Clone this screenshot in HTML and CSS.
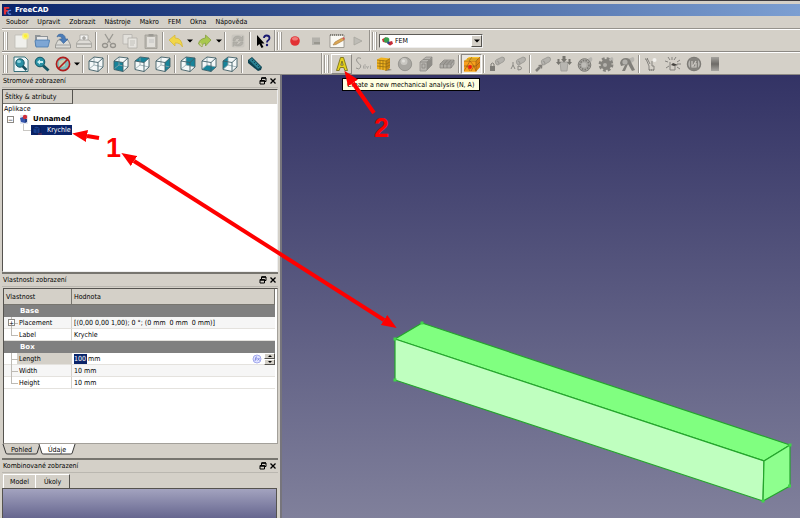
FILE: index.html
```html
<!DOCTYPE html>
<html lang="cs">
<head>
<meta charset="utf-8">
<title>FreeCAD</title>
<link rel="stylesheet" href="styles.css">
</head>
<body>
<svg class="defs" aria-hidden="true">
  <symbol id="wire" viewBox="0 0 16 16">
    <path d="M6 1V9L1 13M6 9L15 11" fill="none" stroke="#8fa3a8" stroke-width=".8"/>
    <path d="M1 5L10 6.500V15.500L1 13.500ZM1 5L6 1L15 2L10 6.500M15 2V11L10 15.500" fill="none" stroke="#3f5e66" stroke-width=".9" stroke-linejoin="round"/>
  </symbol>
  <symbol id="shell" viewBox="0 0 16 16"><path d="M1 5L6 1L15 2V11L10 15.500L1 13.500Z" fill="#f4f8f8"/></symbol>
  <symbol id="float" viewBox="0 0 8 8"><path d="M2.500 3V1H7V4.500H5.500" fill="none" stroke="#000"/><path d="M2.500 1H7" stroke="#000" stroke-width="1.500"/><path d="M1 3.500H5.500V7H1Z" fill="none" stroke="#000"/><path d="M1 4H5.500" stroke="#000" stroke-width="1.500"/></symbol>
  <symbol id="close" viewBox="0 0 8 8"><path d="M1.500 1.500L6.500 6.500M6.500 1.500L1.500 6.500" stroke="#000" stroke-width="1.300"/></symbol>
  <symbol id="tube" viewBox="0 0 16 16"><path d="M7 8Q5 4 9 3L13 1Q16 1 15.500 4Q15 6 12 7L9 9Q8 9 7 8Z" fill="#b4b2ad" stroke="#96948f" stroke-width=".8"/><path d="M8 5Q10 5 10 8" fill="none" stroke="#8f8d88" stroke-width=".8"/></symbol>
  <marker id="head" markerUnits="userSpaceOnUse" markerWidth="15" markerHeight="12" refX="0" refY="6" orient="auto-start-reverse"><path d="M0 0L15 6L0 12Z" fill="#fe0000"/></marker>
</svg>

<header class="titlebar">
  <svg class="app-icon" viewBox="0 0 10 10"><path d="M1 1H7V3H3.500V4.500H6V6.500H3.500V9.500H1Z" fill="#e03038"/><path d="M9 5Q5.500 4.500 5.500 7Q5.500 9.500 9 9" fill="none" stroke="#5a7fd8" stroke-width="1.400"/></svg>
  <span>FreeCAD</span>
</header>
<nav class="menubar">
  <a href="#">Soubor</a><a href="#">Upravit</a><a href="#">Zobrazit</a><a href="#">Nástroje</a><a href="#">Makro</a><a href="#">FEM</a><a href="#">Okna</a><a href="#">Nápověda</a>
</nav>

<div class="toolbar">
  <div class="group">
    <i class="grip"></i>
    <button aria-label="Nový"><svg viewBox="0 0 16 16"><path d="M2 2H14V15H2Z" fill="#f0f0ec" stroke="#bebcb5" stroke-width=".8"/><circle cx="12.500" cy="3" r="3.500" fill="#fff46a" opacity=".75"/><circle cx="12.500" cy="3" r="1.800" fill="#fdf12e"/></svg></button>
    <button aria-label="Otevřít"><svg viewBox="0 0 16 16"><path d="M1 2H6L7 3H14V13H1Z" fill="#8e9397"/><path d="M3 4H13V8H3Z" fill="#e8e8e8"/><path d="M2 14L1 8Q1 7 2 7H15Q16 7 15.500 8L14 14Z" fill="#7ea6d4" stroke="#4878ad" stroke-width=".8"/></svg></button>
    <button aria-label="Uložit"><svg viewBox="0 0 16 16"><path d="M3 7H13L15.500 12V15H.5V12Z" fill="#dcdcd8" stroke="#8b8b88" stroke-width=".8"/><path d="M1 12H15" stroke="#a2a2a0"/><path d="M2 4Q3 0 8 1.500Q10.500 3 10.500 6H13L8.500 10.500L4.500 6H7Q7 4 5 3.500Q3 3 2 4Z" fill="#4b7cb8" stroke="#356297" stroke-width=".6"/></svg></button>
    <button aria-label="Tisk"><svg viewBox="0 0 16 16"><path d="M4 2H12V8H4Z" fill="#f2f2f0" stroke="#aaa8a2" stroke-width=".8"/><path d="M3 7H13L15.500 10V14.500H.5V10Z" fill="#dedcd7" stroke="#a19f99" stroke-width=".8"/><path d="M1 11H15M6 5H10M8 3V7" stroke="#93918c"/></svg></button>
    <i class="sep"></i>
    <button aria-label="Vyjmout"><svg viewBox="0 0 16 16"><path d="M4 1L9.500 10M12 1L6.500 10" stroke="#9a9892" stroke-width="1.300"/><g fill="none" stroke="#95938d" stroke-width="1.300"><ellipse cx="4" cy="12.500" rx="2.500" ry="2"/><ellipse cx="12" cy="12.500" rx="2.500" ry="2"/></g></svg></button>
    <button aria-label="Kopírovat"><svg viewBox="0 0 16 16"><path d="M1 1.500H10V11H1Z" fill="#e2e0db" stroke="#b5b3ad" stroke-width=".8"/><path d="M6 5H15V15H6Z" fill="#e6e4df" stroke="#aeaca6" stroke-width=".8"/><path d="M8 8H13M8 10H13M8 12H12" stroke="#b9b7b1" stroke-width=".8"/></svg></button>
    <button aria-label="Vložit"><svg viewBox="0 0 16 16"><path d="M2 2H14V15.500H2Z" fill="#bab7b0" stroke="#9f9d96" stroke-width=".8"/><path d="M4 4H12V14H4Z" fill="#e2e0db"/><path d="M5.500 1H10.500V3.500H5.500Z" fill="#9c9a94"/><path d="M6 7H11M6 9H11" stroke="#bbb" stroke-width=".8"/></svg></button>
    <i class="sep"></i>
    <button aria-label="Zpět"><svg viewBox="0 0 16 16"><path d="M1 7L7 2V5Q14 5 14.500 14Q12 9.500 7 10V13Z" fill="#f1d648" stroke="#d2b434" stroke-width=".7"/></svg></button>
    <button class="drop" aria-label="Historie zpět"><svg viewBox="0 0 8 8"><path d="M1 2.500H7L4 5.500Z"/></svg></button>
    <button aria-label="Znovu"><svg viewBox="0 0 16 16"><path d="M14 7L8.500 2V5Q2 6 1.500 11L5 14Q5 10 8.500 10V13Z" fill="#a9c84e" stroke="#86a043" stroke-width=".8"/><path d="M3 10L5 13" stroke="#cc9" stroke-width="1.500"/></svg></button>
    <button class="drop" aria-label="Historie vpřed"><svg viewBox="0 0 8 8"><path d="M1 2.500H7L4 5.500Z"/></svg></button>
    <i class="sep"></i>
    <button aria-label="Obnovit"><svg viewBox="0 0 16 16"><rect x="1.500" y="1.500" width="13" height="13" rx="2" fill="#c9c6bf"/><path d="M3 8Q3 3 8 3Q10 3 11.500 4.500L13 3V8H8L10 6Q6 4 5 8ZM13 9Q13 13 8 13Q6 13 4.500 12L3 13.500V9H8L6 11Q9 12.500 11 9Z" fill="#b2b0a9" stroke="#a3a19a" stroke-width=".5"/></svg></button>
    <i class="sep"></i>
    <button aria-label="Co je to?"><svg viewBox="0 0 16 16"><path d="M2 2V13L4.500 11L6.500 15L8.500 14L6.500 10.500H9.500Z" fill="#000"/><path d="M9 5Q9 2.500 11.500 2.500Q14.500 2.500 14.500 5Q14.500 6.500 13 7.500Q12 8 12 9.500" fill="none" stroke="#191970" stroke-width="1.800"/><circle cx="12" cy="12" r="1.200" fill="#191970"/></svg></button>
  </div>
  <div class="group">
    <i class="grip"></i>
    <button aria-label="Záznam makra"><svg viewBox="0 0 16 16"><circle cx="8" cy="8" r="4.800" fill="#e23235"/><ellipse cx="8" cy="5.800" rx="3" ry="1.800" fill="#f07a78"/></svg></button>
    <button aria-label="Zastavit makro"><svg viewBox="0 0 16 16"><path d="M4 4.500H12V12H4Z" fill="#b3b1ab"/><path d="M6 9H12V11H6Z" fill="#99978f"/></svg></button>
    <button aria-label="Makra"><svg viewBox="0 0 16 16"><path d="M1 2H15V14.500H1Z" fill="#faf9f3" stroke="#8e8c84" stroke-width=".8"/><path d="M1 2H15" stroke="#6e6c64" stroke-width="1.500" stroke-dasharray="1 1"/><path d="M4 12L6 9L13 5L15 7L7 11.500Z" fill="#dba651" stroke="#966c38" stroke-width=".5"/><path d="M13 5L15 7L16 6L14.500 4Z" fill="#d45b4e"/></svg></button>
    <button aria-label="Spustit makro"><svg viewBox="0 0 16 16"><path d="M4 4L12 8L4 12Z" fill="#bebcb6" stroke="#a6a49d" stroke-width=".8"/></svg></button>
  </div>
  <div class="group last">
    <i class="grip"></i>
    <div class="combo">
      <svg viewBox="0 0 12 10" aria-hidden="true"><path d="M0 3L4 1L6 3L5 7L1 6Z" fill="#c83232"/><circle cx="5" cy="4" r="3" fill="#37a04d"/><path d="M7 6L11 5L12 8L9 10L7 9Z" fill="#c62b36"/><circle cx="7" cy="7" r="1.500" fill="#33448c"/></svg>
      <select aria-label="Pracovní prostředí"><option>FEM</option></select>
      <span class="combo-arrow"><svg viewBox="0 0 8 8"><path d="M1 2.500H7L4 5.500Z"/></svg></span>
    </div>
  </div>
</div>

<div class="toolbar">
  <div class="group first">
    <i class="grip"></i>
    <button aria-label="Zobrazit vše"><svg viewBox="0 0 16 16"><path d="M1 1H12L15 4V15.500H1Z" fill="#eef6f7" stroke="#25646f" stroke-width=".9"/><path d="M9.500 10L13.500 14" stroke="#16505e" stroke-width="2.500"/><circle cx="7" cy="7" r="4.200" fill="#2a91a5" stroke="#135463"/><ellipse cx="6" cy="5.500" rx="2" ry="1.500" fill="#8ed3de"/></svg></button>
    <button aria-label="Zobrazit výběr"><svg viewBox="0 0 16 16"><path d="M9 9.500L14.500 14.500" stroke="#135463" stroke-width="3"/><circle cx="6" cy="6" r="4.800" fill="#2a91a5" stroke="#135463"/><path d="M3 6L6 3.500V5H9V7H6V8.500Z" fill="#c9edf2"/></svg></button>
    <button aria-label="Styl zobrazení"><svg viewBox="0 0 16 16"><circle cx="8" cy="8" r="6" fill="#7fbdbb"/><path d="M4 5L10 3V10L4 12Z" fill="#c7ceb1"/><circle cx="8" cy="8" r="6.600" fill="none" stroke="#b01c1c" stroke-width="1.600"/><path d="M3.500 12.500L12.500 3.500" stroke="#b01c1c" stroke-width="1.600"/></svg></button>
    <button class="drop" aria-label="Další styly"><svg viewBox="0 0 8 8"><path d="M1 2.500H7L4 5.500Z"/></svg></button>
    <i class="sep"></i>
    <button aria-label="Axonometrie"><svg viewBox="0 0 16 16"><use href="#shell"/><use href="#wire"/></svg></button>
    <i class="sep"></i>
    <button aria-label="Zepředu"><svg viewBox="0 0 16 16"><use href="#shell"/><path d="M1 5L10 6.500V15.500L1 13.500Z" fill="#17849a"/><use href="#wire"/></svg></button>
    <button aria-label="Shora"><svg viewBox="0 0 16 16"><use href="#shell"/><path d="M1 5L6 1L15 2L10 6.500Z" fill="#17849a"/><use href="#wire"/></svg></button>
    <button aria-label="Zprava"><svg viewBox="0 0 16 16"><use href="#shell"/><path d="M10 6.500L15 2V11L10 15.500Z" fill="#17849a"/><use href="#wire"/></svg></button>
    <i class="sep"></i>
    <button aria-label="Zezadu"><svg viewBox="0 0 16 16"><use href="#shell"/><path d="M6 1L15 2V11L6 9Z" fill="#17849a"/><use href="#wire"/></svg></button>
    <button aria-label="Zdola"><svg viewBox="0 0 16 16"><use href="#shell"/><path d="M1 13.500L10 15.500L15 11L6 9Z" fill="#17849a"/><use href="#wire"/></svg></button>
    <button aria-label="Zleva"><svg viewBox="0 0 16 16"><use href="#shell"/><path d="M1 5L6 1V9L1 13.500Z" fill="#17849a"/><use href="#wire"/></svg></button>
    <i class="sep"></i>
    <button aria-label="Změřit vzdálenost"><svg viewBox="0 0 16 16"><path d="M1 4L5 1L15 11L14 14L11 15L1 7Z" fill="#0e4250"/><path d="M2 4L5 2L14 11L11 13Z" fill="#2a7f90"/><path d="M5 5L6.500 3.500M7 7L8.500 5.500M9 9L10.500 7.500M11 11L12.500 9.500" stroke="#0e3440" stroke-width=".8"/></svg></button>
  </div>
  <div class="group last">
    <i class="grip"></i>
    <button class="raised" aria-label="Create a new mechanical analysis" aria-describedby="tip"><svg viewBox="0 0 16 16"><path d="M6.500 1.500H9.500L13.500 14.500H10.800L9.800 11.500H6.200L5.200 14.500H2.500ZM8 5L6.800 9.200H9.200Z" fill="#e5d21c" stroke="#7c7118" stroke-width=".9" fill-rule="evenodd"/></svg></button>
    <button aria-label="Solver"><svg viewBox="0 0 16 16"><path d="M6 2.500Q2 .500 1.500 4Q1.500 6 4 7.500Q6.500 9 5.500 11.500Q4 14 1 12" fill="none" stroke="#96948f"/><path d="M8.500 9.500V12.500M10 8V13M11.500 10L12.500 12.500L13.500 10M15.500 13V9.500" fill="none" stroke="#a19f9a" stroke-width=".8"/></svg></button>
    <button aria-label="Síť z tvaru"><svg viewBox="0 0 16 16"><path d="M10 12L16 14L9 15Z" fill="#777065"/><path d="M1 3.500L5 1.500L14 2.500V12L10 14.500L1 13Z" fill="#f0b21e"/><path d="M10 5L14 2.500V12L10 14.500Z" fill="#c88a14"/><path d="M1 7L10 8L14 6M1 10L10 11L14 9M4 4V13.500M7 4V14M1 4L10 5L14 2.500M10 5V14.500" fill="none" stroke="#8f6812" stroke-width=".7"/></svg></button>
    <button aria-label="Materiál"><svg viewBox="0 0 16 16"><circle cx="8" cy="8" r="6.700" fill="#a9a7a2" stroke="#8d8b86" stroke-width=".8"/><circle cx="7" cy="5.500" r="3.500" fill="#c9c7c2"/><circle cx="6.500" cy="5" r="1.500" fill="#e1dfdb"/></svg></button>
    <button aria-label="Průřez nosníku"><svg viewBox="0 0 16 16"><path d="M2 6L8 1H14V9L8 15H2Z" fill="#b7b5b0" stroke="#908e89" stroke-width=".8"/><path d="M9 6L14 2V9L9 14Z" fill="#8e8c87"/><path d="M2 6H9V14M9 6L14 1M4 8H7V12H4ZM5 3.500H11" fill="none" stroke="#8a8883" stroke-width=".8"/></svg></button>
    <button aria-label="Tloušťka skořepiny"><svg viewBox="0 0 16 16"><path d="M1 8L5 4H15V8L12 12H1Z" fill="#b0aea9" stroke="#8a8883" stroke-width=".8"/><path d="M1 8H12L15 4M12 8V12M4.500 8V12M8 8V12M8.500 4L5 8M12 4L8.500 8M3 6H13.500" fill="none" stroke="#85837e" stroke-width=".8"/></svg></button>
    <i class="sep"></i>
    <button class="pressed" aria-label="Síť"><svg viewBox="0 0 16 16"><path d="M0 5L5 1H16V11L12 15.500H0Z" fill="#ffc52b"/><path d="M0 5H12V15.500H0Z" fill="#f8a01c"/><path d="M12 5L16 1V11L12 15.500Z" fill="#dc8312"/><path d="M0 5H12V15.500M12 5L16 1M0 10H12L16 6M5 5L8 1M3 3L14 3M6 5L3 10L6 15M6 5L10 10L7 15M0 15L3 10M12 15L10 10" fill="none" stroke="#8a5510" stroke-width=".6"/><circle cx="6" cy="11" r="1.900" fill="#f01616"/></svg></button>
    <i class="sep"></i>
    <button aria-label="Pevná podpora"><svg viewBox="0 0 16 16"><use href="#tube"/><path d="M1 10H6V15H1Z" fill="#7e7c77"/><path d="M2 10V8Q3.500 6 5 8V10" fill="none" stroke="#7e7c77"/></svg></button>
    <button aria-label="Posunutí"><svg viewBox="0 0 16 16"><use href="#tube"/><path d="M1 13L3 9L5 13M3 9V6M8 10V14Q12 14 11.500 12Q11 10 8 10" fill="none" stroke="#8a8883"/></svg></button>
    <i class="sep"></i>
    <button aria-label="Síla"><svg viewBox="0 0 16 16"><use href="#tube"/><path d="M1 15L5 11" stroke="#827f7a" stroke-width="2.500"/><path d="M3 9L7.500 8.500L7 13Z" fill="#827f7a"/></svg></button>
    <button aria-label="Tlak"><svg viewBox="0 0 16 16"><path d="M4 6H12L11 15H5Z" fill="#b8b6b1" stroke="#9c9a95" stroke-width=".8"/><path d="M6.500 0H9.500V3H11L8 6.500L5 3H6.500ZM1.500 3H3.500V6H5L2.500 9L0 6H1.500ZM12.500 3H14.500V6H16L13.500 9L11 6H12.500Z" fill="#77756f"/></svg></button>
    <button aria-label="Ložisko"><svg viewBox="0 0 16 16"><path d="M9 4L14 1Q16 2 15 5L11 8Z" fill="#b7b5b0"/><circle cx="7.500" cy="9" r="6.300" fill="#aaa8a3" stroke="#7e7c77" stroke-width="1"/><circle cx="7.500" cy="9" r="4.500" fill="none" stroke="#7a7873" stroke-width="1.600" stroke-dasharray="1.500 1.200"/><circle cx="7" cy="9" r="2.500" fill="#bdbbb6"/></svg></button>
    <button aria-label="Ozubené kolo"><svg viewBox="0 0 16 16"><path d="M9 4L14 1Q16 2 15 5L11 8Z" fill="#b7b5b0"/><circle cx="8" cy="8.500" r="5.400" fill="#85837e"/><circle cx="8" cy="8.500" r="6" fill="none" stroke="#85837e" stroke-width="2.800" stroke-dasharray="2.700 2"/><circle cx="7" cy="9" r="2" fill="#b4b2ad"/></svg></button>
    <button aria-label="Řemenice"><svg viewBox="0 0 16 16"><path d="M9 3L14 1Q16 2 15 5L11 8Z" fill="#b7b5b0"/><path d="M1 7Q2 2 7 2Q11 2 12 6L16 14L13 15L9 8L6 15H3L6 9L2 10Z" fill="#82807b"/><circle cx="6" cy="6" r="2.600" fill="#b2b0ab"/></svg></button>
    <i class="sep"></i>
    <button aria-label="Výpočet"><svg viewBox="0 0 16 16"><path d="M2 3L5 10V14H10V10H8V5M3 2L6 8" fill="none" stroke="#85837e"/><circle cx="10.500" cy="4" r="2" fill="#f1f0ed"/><path d="M1 3H4M5 14H10" stroke="#77756f" stroke-dasharray="1 1"/></svg></button>
    <button aria-label="Rychlá analýza"><svg viewBox="0 0 16 16"><path d="M5 6V14H10V10M0 5L3 6M1 12L4 10M3 1L5 4M7 1V4M11 1L9 4M15 4L12 6M12 11L15 13M12 8H16" fill="none" stroke="#85837e"/><path d="M6 9L8 7L13 9L9 10Z" fill="#45433f"/></svg></button>
    <button aria-label="Smazat výsledky"><svg viewBox="0 0 16 16"><circle cx="8" cy="8" r="6.500" fill="#b9b7b2" stroke="#7d7b76" stroke-width="1.500"/><path d="M4 2H12V14H4Z" fill="#85837e"/><path d="M6 5V11H10V7M10 5L7 10" fill="none" stroke="#cfccc6" stroke-width="1.200"/></svg></button>
    <button aria-label="Zobrazit výsledky"><svg viewBox="0 0 16 16"><linearGradient id="bar" x2="0" y2="1"><stop stop-color="#a5a39e"/><stop offset=".5" stop-color="#6d6b67"/><stop offset="1" stop-color="#a8a6a1"/></linearGradient><path d="M4 1H12V15H4Z" fill="url(#bar)"/></svg></button>
  </div>
</div>

<main class="workspace">
  <aside class="docks">
    <section class="dock">
      <h2 class="dock-title">Stromové zobrazení<span class="dock-buttons"><button aria-label="Odpojit"><svg><use href="#float"/></svg></button><button aria-label="Zavřít"><svg><use href="#close"/></svg></button></span></h2>
      <div class="tree">
        <div class="tree-head"><span>Štítky &amp; atributy</span></div>
        <ul>
          <li>Aplikace</li>
          <li class="level1"><i class="expander">−</i><svg viewBox="0 0 10 10"><path d="M1 1H9V10H1Z" fill="#e5e8f1"/><path d="M1 4L4 3L6 5V9L2 8Z" fill="#3556ad"/><circle cx="6" cy="3" r="2.200" fill="#cf2d38"/><path d="M6 5H8V8L6 9Z" fill="#213c82"/></svg><b>Unnamed</b></li>
          <li class="level2"><span class="node"><svg viewBox="0 0 10 10"><path d="M1 3L4 1L8 2V8L5 9L1 8Z" fill="#183f92" stroke="#061648" stroke-width=".7"/><path d="M1 3L5 4L8 2M5 4V9" fill="none" stroke="#0a1c52" stroke-width=".7"/><path d="M6 9H10" stroke="#7c3350"/></svg><span>Krychle</span></span></li>
        </ul>
      </div>
    </section>

    <section class="dock">
      <h2 class="dock-title">Vlastnosti zobrazení<span class="dock-buttons"><button aria-label="Odpojit"><svg><use href="#float"/></svg></button><button aria-label="Zavřít"><svg><use href="#close"/></svg></button></span></h2>
      <div class="props">
        <table>
          <thead><tr><th>Vlastnost</th><th>Hodnota</th></tr></thead>
          <tbody>
            <tr class="cat"><th colspan="2">Base</th></tr>
            <tr class="alt"><td class="key"><i class="expander">+</i>Placement</td><td>[(0,00 0,00 1,00); 0 °; (0 mm&nbsp; 0 mm&nbsp; 0 mm)]</td></tr>
            <tr><td class="key end">Label</td><td>Krychle</td></tr>
            <tr class="cat"><th colspan="2">Box</th></tr>
            <tr class="active"><td class="key"><label for="len">Length</label></td><td><div class="editor"><input id="len" value="100"><span>mm</span><svg viewBox="0 0 10 10"><circle cx="5" cy="5" r="4" fill="#e0e3ff" stroke="#9ca3ea" stroke-width=".9"/><path d="M3 7L4 3H5M3 5H5M5.500 4L7.500 6.500M7.500 4L5.500 6.500" fill="none" stroke="#6a72db" stroke-width=".7"/></svg><span class="spin"><button aria-label="Zvýšit"><svg viewBox="0 0 8 4"><path d="M2 3H6L4 1Z"/></svg></button><button aria-label="Snížit"><svg viewBox="0 0 8 4"><path d="M2 1H6L4 3Z"/></svg></button></span></div></td></tr>
            <tr class="alt"><td class="key">Width</td><td>10 mm</td></tr>
            <tr><td class="key end">Height</td><td>10 mm</td></tr>
          </tbody>
        </table>
      </div>
      <div class="bottom-tabs">
        <button><svg viewBox="0 0 40 11" preserveAspectRatio="none"><path d="M1 0L4 9Q4 10 6 10H34Q36 10 36 9L39 0" fill="#d4d0c8" stroke="#333"/></svg><span>Pohled</span></button>
        <button><svg viewBox="0 0 40 11" preserveAspectRatio="none"><path d="M1 0L4 9Q4 10 6 10H34Q36 10 36 9L39 0" fill="#fff" stroke="#333"/></svg><span>Údaje</span></button>
      </div>
    </section>

    <section class="dock">
      <h2 class="dock-title">Kombinované zobrazení<span class="dock-buttons"><button aria-label="Odpojit"><svg><use href="#float"/></svg></button><button aria-label="Zavřít"><svg><use href="#close"/></svg></button></span></h2>
      <div class="top-tabs"><button>Model</button><button class="current">Úkoly</button></div>
      <div class="task-panel"></div>
    </section>
  </aside>

  <div class="view">
    <svg class="scene" viewBox="282 75 518 443" preserveAspectRatio="xMinYMin meet">
      <g stroke="#24a52c" stroke-width="1.200" stroke-linejoin="round">
        <path d="M395 339L422 323L790 445L764 461Z" fill="#80ff80"/>
        <path d="M395 339L764 461L763 501L395 380Z" fill="#bfffbf"/>
        <path d="M764 461L790 445V486L763 501Z" fill="#8eff8e"/>
      </g>
      <g fill="#3fd548"><path d="M393.500 337.500h3v3h-3zM420.500 321.500h3v3h-3zM393.500 378.500h3v3h-3zM788.500 443.500h3v3h-3zM788 484.500h3v3h-3zM761.500 499.500h3v3h-3z"/></g>
    </svg>
  </div>
</main>

<div class="tooltip" id="tip" role="tooltip">Create a new mechanical analysis (N, A)</div>
<svg class="notes" viewBox="0 0 800 518" preserveAspectRatio="xMinYMin meet">
  <g stroke="#fe0000" stroke-width="4">
    <path d="M99 138L87 136" marker-end="url(#head)"/>
    <path d="M134 161L384 320" marker-start="url(#head)" marker-end="url(#head)"/>
    <path d="M374 113L353 83" marker-end="url(#head)"/>
  </g>
  <text x="106" y="157">1</text>
  <text x="374" y="137">2</text>
</svg>
</body>
</html>
```
FILE: styles.css
```css
* { box-sizing: border-box; }

body {
  margin: 0;
  height: 100vh;
  display: flex;
  flex-direction: column;
  position: relative;
  overflow: hidden;
  padding-left: 2px;
  border-top: 1px solid #3c3a3e;
  background: #d4d0c8;
  color: #000;
  font: 7px/10px "DejaVu Sans Condensed", "DejaVu Sans", sans-serif;
}

button {
  margin: 0;
  padding: 0;
  border: 0;
  background: none;
  color: inherit;
  font: inherit;
}

svg { display: block; }
.defs { position: absolute; width: 0; height: 0; }

.titlebar {
  display: flex;
  align-items: center;
  gap: 3px;
  height: 12px;
  margin-top: 3px;
  padding-left: 1px;
  flex: none;
  background: linear-gradient(90deg, #0a246a, #7c9fd2);
  color: #fff;
  font-family: "DejaVu Sans", sans-serif;
  font-weight: bold;
}
.app-icon { width: 9px; height: 9px; }

.menubar {
  display: flex;
  align-items: center;
  gap: 9px;
  height: 13px;
  padding-left: 4px;
  flex: none;
  border-bottom: 1px solid #96938d;
}
.menubar a { color: inherit; text-decoration: none; }

.toolbar {
  display: flex;
  height: 23px;
  flex: none;
  border-top: 1px solid #fff;
  border-bottom: 1px solid #8c8984;
}
.group {
  display: flex;
  align-items: center;
  padding: 0 1px;
  border-right: 1px solid #96938d;
  box-shadow: 1px 0 #f4f2ee;
}
.group + .group { margin-left: 1px; }
.group.first { min-width: 320px; }
.group.last { flex: 1; border-right: 0; }
.grip {
  width: 5px;
  height: 18px;
  margin-right: 2px;
  border: solid #9b9892;
  border-width: 0 1px;
  background: linear-gradient(90deg, #fff 1px, #d4d0c8 1px 2px, #fff 2px);
}
.sep {
  width: 2px;
  height: 18px;
  margin: 0 1px;
  border-left: 1px solid #96938d;
  border-right: 1px solid #fff;
}
.toolbar button {
  display: grid;
  place-items: center;
  width: 21px;
  height: 20px;
}
.toolbar button svg { width: 16px; height: 16px; }
.toolbar button.drop { width: 8px; }
.toolbar button.drop svg { width: 8px; height: 8px; }
.toolbar .raised { border: 1px solid; border-color: #fff #8c8984 #8c8984 #fff; }
.toolbar .pressed {
  border: 1px solid;
  border-color: #8c8984 #fff #fff #8c8984;
  background: #eae7e2;
}

.combo { position: relative; width: 104px; height: 14px; }
.combo > svg { position: absolute; left: 3px; top: 2px; width: 11px; height: 10px; }
.combo select {
  width: 100%;
  height: 100%;
  padding: 0 12px 0 15px;
  appearance: none;
  border: 1px solid;
  border-color: #5e5c58 #eee #eee #5e5c58;
  border-radius: 0;
  background: #fff;
  color: #000;
  font: inherit;
}
.combo-arrow {
  position: absolute;
  right: 1px;
  top: 1px;
  display: grid;
  place-items: center;
  width: 11px;
  height: 12px;
  border: 1px solid;
  border-color: #fff #55534f #55534f #fff;
  background: #d4d0c8;
  pointer-events: none;
}
.combo-arrow svg { width: 8px; height: 8px; }

.workspace { display: flex; flex: 1; min-height: 0; }
.docks {
  display: grid;
  grid-template-rows: 197fr 186fr 60fr;
  flex: 0 0 280px;
  min-height: 0;
  padding-right: 2px;
  border-right: 2px solid #77757c;
}
.dock { display: flex; flex-direction: column; min-height: 0; }
.dock + .dock { border-top: 2px solid #77756f; }
.dock-title {
  display: flex;
  align-items: center;
  height: 13px;
  margin: 0 0 1px;
  padding: 0 1px;
  flex: none;
  border-bottom: 1px solid #bab7b0;
  font-size: 7px;
  font-weight: normal;
}
.dock-buttons { display: flex; gap: 2px; margin-left: auto; }
.dock-buttons svg { width: 8px; height: 8px; }

.tree {
  flex: 1;
  border: 1px solid #55534f;
  border-right-color: #eee;
  border-bottom-color: #eee;
  background: #fff;
}
.tree-head { height: 14px; background: #d4d0c8; }
.tree-head span {
  display: block;
  width: 70px;
  height: 14px;
  padding: 2px;
  border-right: 1px solid #55534f;
  border-bottom: 1px solid #77756f;
}
.tree ul { margin: 0; padding: 0; list-style: none; }
.tree li { display: flex; align-items: center; height: 10px; padding-left: 1px; }
.tree svg { width: 10px; height: 10px; }
.tree .level1 { gap: 4px; padding-left: 4px; }
.tree .level1 svg { margin-left: 1px; }
.tree b { font-family: "DejaVu Sans", sans-serif; }
.tree .level2 { padding-left: 20px; height: 11px; }
.tree .level2::before {
  content: "";
  width: 7px;
  height: 6px;
  margin-bottom: 5px;
  border-left: 1px solid #c9c7c3;
  border-bottom: 1px solid #c9c7c3;
}
.node {
  display: flex;
  align-items: center;
  gap: 5px;
  height: 10px;
  padding: 0 1px;
  background: #0a246a;
  color: #fff;
}
.expander {
  display: inline-grid;
  place-items: center;
  width: 7px;
  height: 7px;
  border: 1px solid #8c8984;
  background: #fff;
  font: 6px/5px "DejaVu Sans", sans-serif;
}

.props {
  flex: 1;
  min-height: 0;
  margin-left: 1px;
  border: 1px solid #55534f;
  border-right-color: #a3a09a;
  border-bottom-color: #a3a09a;
  background: #fff;
}
.props table {
  width: calc(100% - 2px);
  border-collapse: separate;
  border-spacing: 0;
  table-layout: fixed;
}
.props th, .props td { height: 12px; padding: 0 2px; text-align: left; font-weight: normal; white-space: nowrap; }
.props thead th {
  height: 16px;
  border: solid #77756f;
  border-width: 0 1px 1px 0;
  background: #d4d0c8;
}
.props thead th:first-child { width: 68px; }
.props .cat th {
  padding-left: 16px;
  background: #808080;
  color: #fff;
  font-family: "DejaVu Sans", sans-serif;
  font-weight: bold;
}
.props tbody td { border-bottom: 1px solid #e4e2de; }
.props .alt td { background: #f6f6f6; }
.props .key { position: relative; padding-left: 15px; border-right: 1px solid #d4d0c8; }
.props .key::before {
  content: "";
  position: absolute;
  left: 7px;
  top: 0;
  width: 6px;
  height: 6px;
  border-left: 1px solid #bdbab4;
  border-bottom: 1px solid #bdbab4;
}
.props .key:not(.end)::after {
  content: "";
  position: absolute;
  left: 7px;
  top: 6px;
  height: 6px;
  border-left: 1px solid #bdbab4;
}
.props .expander { position: absolute; z-index: 1; left: 4px; top: 2px; }
.props .active .key { background: linear-gradient(90deg, #fff 13px, #d4d0c8 13px); }
.props .active td:last-child { padding-right: 0; }
.editor { display: flex; align-items: center; gap: 1px; height: 11px; }
.editor input {
  width: 13px;
  height: 10px;
  padding: 0;
  border: 0;
  background: #0a246a;
  color: #fff;
  font: inherit;
}
.editor > svg { width: 10px; height: 10px; margin-left: auto; }
.spin { display: grid; width: 11px; height: 12px; margin-left: 1px; }
.spin button {
  display: grid;
  place-items: center;
  height: 6px;
  border: 1px solid;
  border-color: #fff #55534f #55534f #fff;
  background: #d4d0c8;
}
.spin svg { width: 8px; height: 4px; }

.bottom-tabs { display: flex; height: 14px; flex: none; }
.bottom-tabs button { position: relative; width: 39px; height: 11px; }
.bottom-tabs button + button { margin-left: -3px; width: 38px; }
.bottom-tabs svg { position: absolute; left: 0; top: 0; width: 100%; height: 11px; }
.bottom-tabs span { position: relative; }

.top-tabs { display: flex; height: 14px; padding-left: 1px; flex: none; }
.top-tabs button {
  padding: 1px 6px;
  border-top: 1px solid #fff;
  border-left: 1px solid #fff;
}
.top-tabs .current { padding: 0 8px; border-right: 1px solid #55534f; }
.task-panel {
  flex: 1;
  border: 1px solid #55534f;
  border-bottom: 0;
  margin-right: 1px;
  background: linear-gradient(#a3a3bf, #66668f);
}

.view { flex: 1; min-width: 0; background: linear-gradient(#333365, #80809b); }
.scene { width: 100%; height: 100%; }

.tooltip {
  position: absolute;
  left: 342px;
  top: 77px;
  height: 13px;
  padding: 1px 5px 1px 4px;
  border: 1px solid #000;
  background: #ffffe1;
  white-space: nowrap;
}
.notes {
  position: absolute;
  left: 0;
  top: -1px;
  width: 100%;
  height: 100vh;
  pointer-events: none;
  fill: #fe0000;
  font: bold 27px "Liberation Sans", sans-serif;
}
```
